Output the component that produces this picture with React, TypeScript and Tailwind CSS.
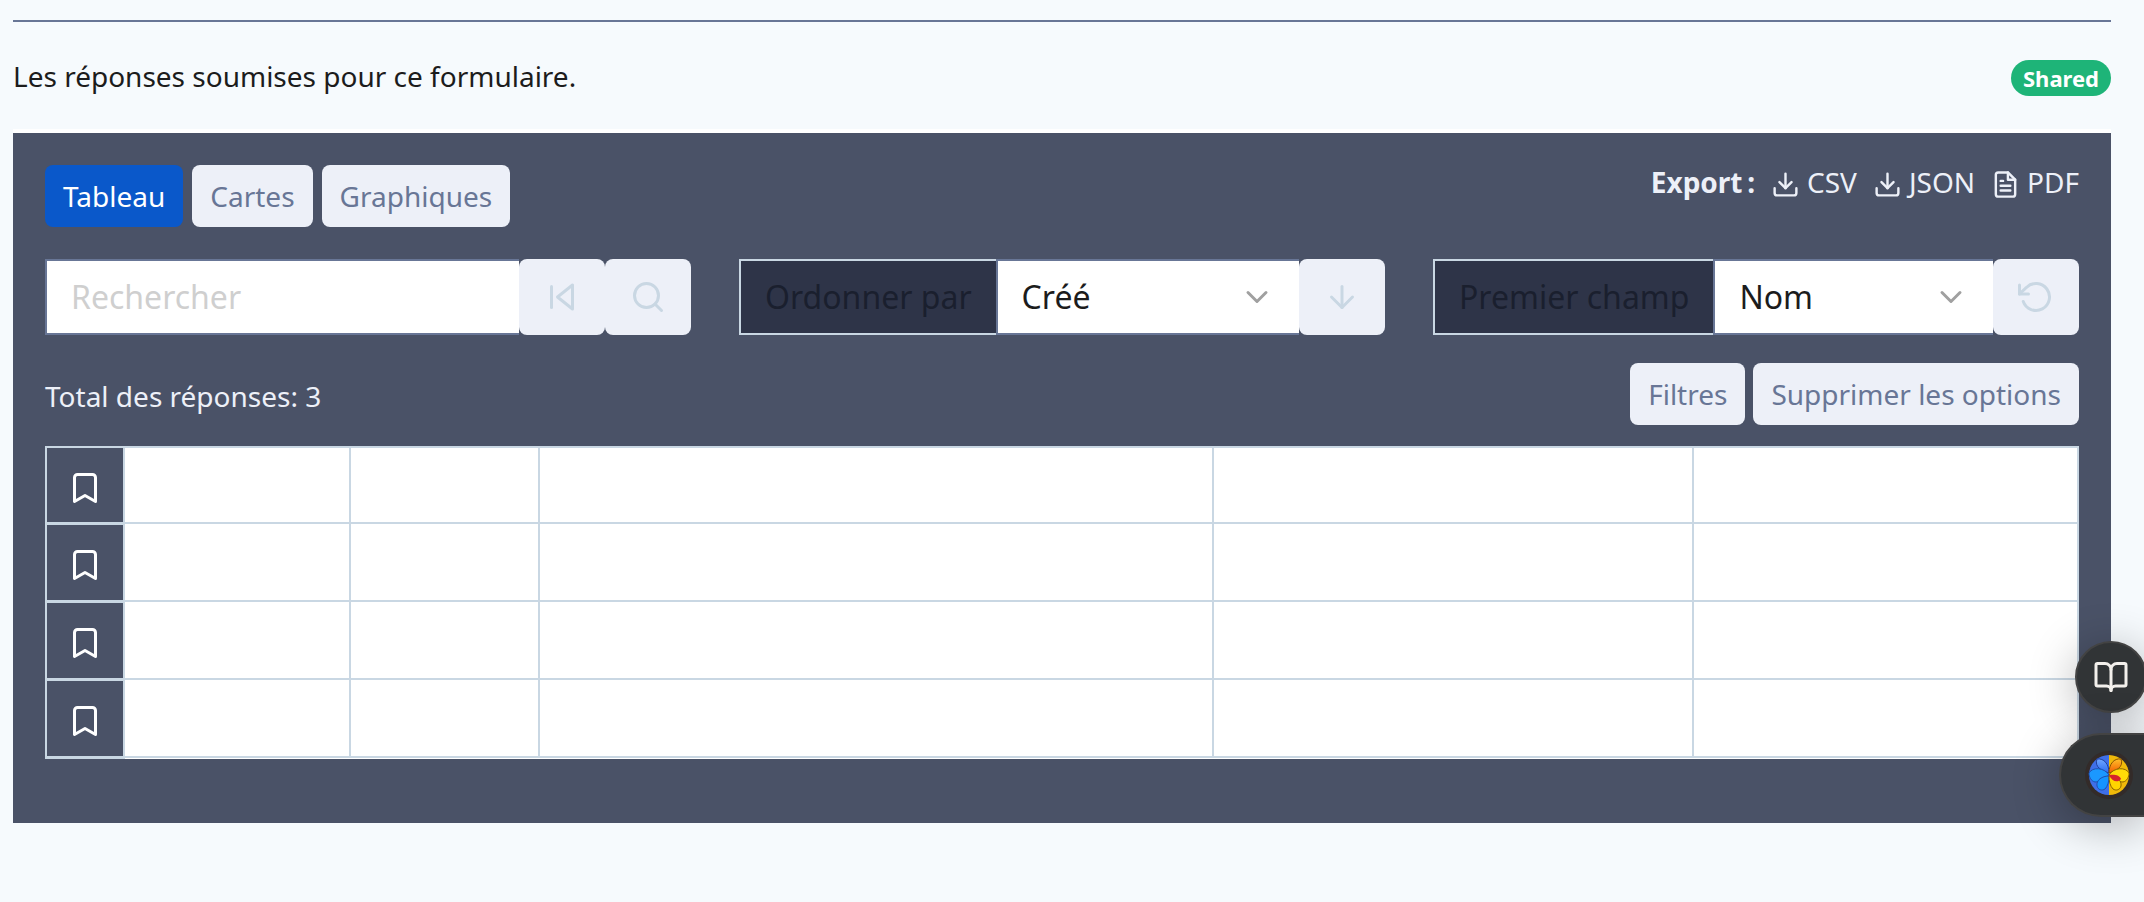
import { useState } from 'react';
import { ArrowDown, Bookmark, BookOpen, ChevronDown, Download, Search } from 'lucide-react';

const tabs = ['Tableau', 'Cartes', 'Graphiques'];

const buttonBase = 'h-[62px] rounded-lg px-[18px] text-[28px] leading-[38px]';
const squareButton = 'flex w-[86px] shrink-0 items-center justify-center rounded-lg bg-[#edf0f8] text-[#c9d7e3]';

interface LineIconProps {
  className?: string;
  children: React.ReactNode;
}

const LineIcon = ({ className, children }: LineIconProps) => (
  <svg
    viewBox="0 0 24 24"
    className={className}
    fill="none"
    stroke="currentColor"
    strokeWidth="2"
    strokeLinecap="round"
    strokeLinejoin="round"
    aria-hidden="true"
  >
    {children}
  </svg>
);

const SkipBackIcon = () => (
  <LineIcon className="size-9">
    <path d="M19 20 9 12l10-8z" />
    <path d="M5 19V5" />
  </LineIcon>
);

const ResetIcon = () => (
  <LineIcon className="size-9">
    <path d="M1 4v6h6" />
    <path d="M3.51 15a9 9 0 1 0 2.13-9.36L1 10" />
  </LineIcon>
);

const FileTextIcon = () => (
  <LineIcon className="mt-1 size-[29px]">
    <path d="M14 2H6a2 2 0 0 0-2 2v16a2 2 0 0 0 2 2h12a2 2 0 0 0 2-2V8z" />
    <path d="M14 2v6h6" />
    <path d="M16 13H8M16 17H8M10 9H8" />
  </LineIcon>
);

const PinwheelLogo = () => (
  <svg viewBox="0 0 48 48" className="size-12" aria-hidden="true">
    <defs>
      <linearGradient id="petal-blue" x1="0" y1="0" x2="0" y2="1">
        <stop offset="0" stopColor="#6fa6ff" />
        <stop offset="1" stopColor="#2c6cf0" />
      </linearGradient>
      <linearGradient id="petal-orange" x1="0" y1="0" x2="0" y2="1">
        <stop offset="0" stopColor="#ffc02a" />
        <stop offset="1" stopColor="#f25c00" />
      </linearGradient>
    </defs>
    <circle cx="24" cy="24" r="24" fill="#332b29" />
    <path d="M24 4a20 20 0 0 0 0 40z" fill="#3f6fe8" />
    <path d="M24 4a20 20 0 0 1 0 40z" fill="#f0b90a" />
    {/* Blue half */}
    <path d="M24 22C17 20 9 16 12 8c7-1 12 5 12 14z" fill="url(#petal-blue)" stroke="#1f3f9c" strokeWidth="1" />
    <path d="M4 22c3-6 15-6 20 2-5 3-9 7-14 7-4-1-6-5-6-9z" fill="#1b98ff" stroke="#1f4fae" strokeWidth="1" />
    <path d="M24 25c-7 0-13 4-12 10 1 4 5 5 8 3 3-3 4-8 4-13z" fill="#1593ff" stroke="#1f4fae" strokeWidth="1" />
    {/* Yellow half */}
    <path d="M24 22c7-2 15-6 12-14-7-1-12 5-12 14z" fill="url(#petal-orange)" stroke="#8a5200" strokeWidth="1" />
    <path d="M44 22c-3-6-15-6-20 2 5 3 9 7 14 7 4-1 6-5 6-9z" fill="#ffdc08" stroke="#8a6200" strokeWidth="1" />
    <path d="M24 25c7 0 13 4 12 10-1 4-5 5-8 3-3-3-4-8-4-13z" fill="#ffd500" stroke="#8a6200" strokeWidth="1" />
    <path d="M24 24c5-1 11 0 12 4-3 4-9 3-12-4z" fill="#d6232b" />
  </svg>
);

interface SelectGroupProps {
  id: string;
  label: string;
  option: string;
  buttonLabel: string;
  children: React.ReactNode;
}

const SelectGroup = ({ id, label, option, buttonLabel, children }: SelectGroupProps) => (
  <div className="flex h-[76px]">
    <label
      htmlFor={id}
      className="flex shrink-0 items-center border-y-2 border-l-2 border-[#c9d7e3] bg-[#2e3448] px-6 text-[32px] text-[#1a1f2e]"
    >
      {label}
    </label>
    <div className="relative flex-1">
      <select id={id} className="h-full w-full appearance-none border-2 border-r-0 border-[#687696] bg-white pl-6 text-[32px] text-[#1c1c1c]">
        <option>{option}</option>
      </select>
      <ChevronDown className="pointer-events-none absolute top-5 right-6 size-9 text-[#a0a0a0]" />
    </div>
    <button type="button" aria-label={buttonLabel} className={squareButton}>
      {children}
    </button>
  </div>
);

const App = () => {
  const [activeTab, setActiveTab] = useState('Tableau');

  return (
    <div className="min-h-screen overflow-x-hidden bg-[#f6fafd] pt-5 pr-[33px] pb-20 pl-[13px] font-['Noto_Sans',sans-serif] text-[28px] leading-[42px] text-[#1c1c1c]">
      <hr className="border-t-2 border-[#687696]" />

      <div className="flex h-[107px] items-center justify-between pt-1">
        <p className="pb-1">Les réponses soumises pour ce formulaire.</p>
        <span className="rounded-full bg-[#1eb478] px-3 text-[22px] leading-9 font-bold text-white">Shared</span>
      </div>

      <main className="border-t-4 border-white bg-[#4a5267]">
        <div className="px-8 pt-8 pb-16">
          {/* View tabs and export links */}
          <div className="flex items-start justify-between">
            <div className="flex gap-[9px]">
              {tabs.map((tab) => (
                <button
                  key={tab}
                  type="button"
                  onClick={() => setActiveTab(tab)}
                  className={`${buttonBase} ${tab === activeTab ? 'bg-[#0a58ca] text-white' : 'bg-[#edf0f8] text-[#687696]'}`}
                >
                  {tab}
                </button>
              ))}
            </div>
            <div className="flex items-center gap-4 leading-[34px] text-[#edf0f8]">
              <strong>Export{'\u202f'}:</strong>
              <a href="#csv" className="flex items-center gap-[7px]">
                <Download className="mt-1 size-[29px]" />
                CSV
              </a>
              <a href="#json" className="flex items-center gap-[7px]">
                <Download className="mt-1 size-[29px]" />
                JSON
              </a>
              <a href="#pdf" className="flex items-center gap-[7px]">
                <FileTextIcon />
                PDF
              </a>
            </div>
          </div>

          {/* Search and ordering */}
          <div className="mt-8 grid grid-cols-3 gap-12">
            <form className="flex h-[76px]">
              <input
                type="search"
                aria-label="Rechercher"
                placeholder="Rechercher"
                className="min-w-0 flex-1 border-2 border-r-0 border-[#687696] bg-white px-6 text-[32px] placeholder:text-[#cfcfcf]"
              />
              <button type="button" aria-label="Réinitialiser" className={squareButton}>
                <SkipBackIcon />
              </button>
              <button type="button" aria-label="Lancer la recherche" className={squareButton}>
                <Search className="size-9" />
              </button>
            </form>
            <SelectGroup id="order" label="Ordonner par" option="Créé" buttonLabel="Ordre décroissant">
              <ArrowDown className="size-9" />
            </SelectGroup>
            <SelectGroup id="first-field" label="Premier champ" option="Nom" buttonLabel="Rétablir">
              <ResetIcon />
            </SelectGroup>
          </div>

          <div className="mt-7 flex items-center justify-between text-[#edf0f8]">
            <p className="pt-1">Total des réponses: 3</p>
            <div className="flex gap-2 text-[#687696]">
              <button type="button" className={`${buttonBase} bg-[#edf0f8]`}>Filtres</button>
              <button type="button" className={`${buttonBase} bg-[#edf0f8]`}>Supprimer les options</button>
            </div>
          </div>

          <table className="mt-[21px] w-full table-fixed border-collapse bg-white">
            <colgroup>
              <col className="w-[78px]" />
              <col className="w-[11.1%]" />
              <col className="w-[9.3%]" />
              <col className="w-[33.2%]" />
              <col className="w-[23.6%]" />
              <col />
            </colgroup>
            <tbody>
              {[0, 1, 2, 3].map((row) => (
                <tr key={row} className="h-[78px] first:h-[76px]">
                  <th scope="row" className="border-2 border-b-3 border-[#c9d7e3] bg-[#4a5267]">
                    <Bookmark className="mx-auto mt-1.5 size-9 text-white" />
                  </th>
                  {[0, 1, 2, 3, 4].map((cell) => (
                    <td key={cell} className="border-2 border-[#c9d7e3]" />
                  ))}
                </tr>
              ))}
            </tbody>
          </table>
        </div>
      </main>

      {/* Floating tools docked to the window edge */}
      <div className="fixed right-0 bottom-[85px] flex flex-col items-end gap-5">
        <button
          type="button"
          aria-label="Mode lecture"
          className="-mr-[3px] flex size-[72px] items-center justify-center rounded-full border-2 border-[#434343] bg-[#313436] text-[#f3f0ec] shadow-[0_8px_48px_rgba(0,0,0,0.3)]"
        >
          <BookOpen className="size-9" />
        </button>
        <button
          type="button"
          aria-label="Assistant"
          className="flex h-[84px] w-[85px] items-center rounded-l-full border-2 border-r-0 border-[#434343] bg-[#313436] pl-6 shadow-[0_8px_48px_rgba(0,0,0,0.3)]"
        >
          <PinwheelLogo />
        </button>
      </div>
    </div>
  );
};

export default App;
